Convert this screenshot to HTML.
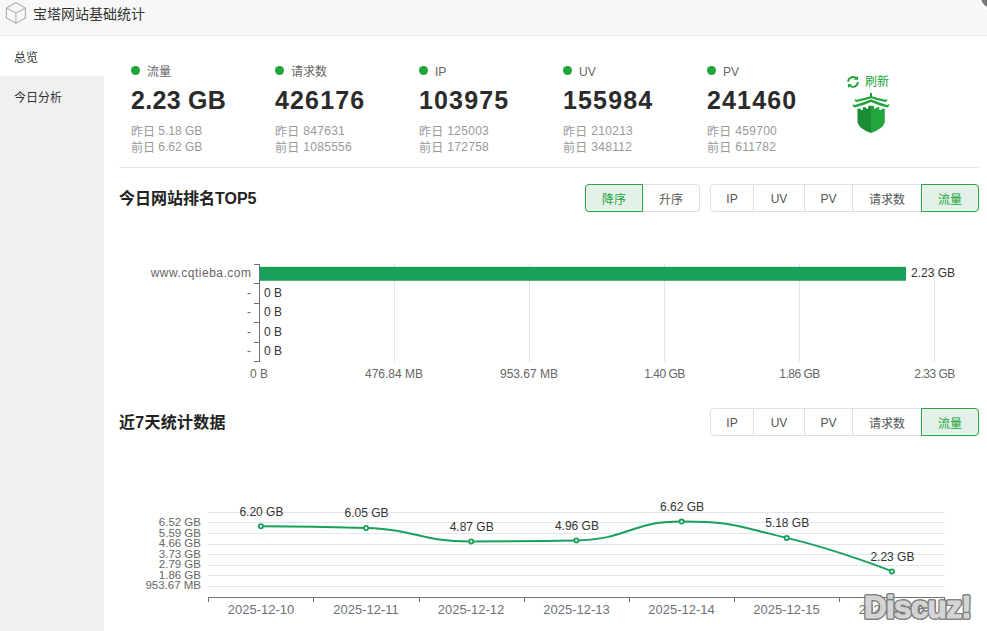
<!DOCTYPE html>
<html lang="zh-CN">
<head>
<meta charset="utf-8">
<title>宝塔网站基础统计</title>
<style>
*{box-sizing:border-box;margin:0;padding:0}
html,body{width:987px;height:631px;overflow:hidden;background:#fff}
body{font-family:"Liberation Sans","Noto Sans CJK SC",sans-serif;font-size:12px;color:#333;position:relative}
.abs{position:absolute}
#hdr{left:0;top:0;width:987px;height:36px;background:#f8f8f8;border-bottom:1px solid #ececec}
#hdr .ttl{left:33px;top:0;height:28px;line-height:28px;font-size:14px;color:#333;white-space:nowrap}
#close{left:978px;top:-17.5px;width:28px;height:28px;border-radius:50%;background:#767676;border:3px solid #fff;box-shadow:0 0 2px rgba(0,0,0,.08)}
#side{left:0;top:36px;width:104px;height:595px;background:#f0f0f0}
#side .it{left:0;width:104px;height:40px;line-height:44px;padding-left:14px;font-size:12px;color:#333;white-space:nowrap}
#side .it.on{background:#fff}
.stat{top:60px;width:140px;white-space:nowrap}
.stat .lb{left:0;top:1px;height:22px;line-height:22px;font-size:12px;color:#666;padding-left:16px}
.stat .dot{left:-0.4px;top:6.3px;width:9px;height:9px;border-radius:50%;background:#20a53a}
.stat .num{left:0;top:25px;height:30px;line-height:30px;font-size:25px;font-weight:bold;color:#2b2b2b;letter-spacing:1.15px}
.stat .num.n1{letter-spacing:0.3px}
.stat .sub.d{letter-spacing:0.3px}
.stat .sub .c{position:relative;top:1px}
.stat .sub{left:0;font-size:12px;color:#999;height:17px;line-height:17px}
.hr{left:119px;top:167px;width:860px;height:1px;background:#e6e6e6}
.h3{left:119px;font-size:16px;font-weight:bold;color:#222;height:24px;line-height:24px;white-space:nowrap}
.bg{top:0;height:28px;display:flex}
.bg span{display:block;height:28px;line-height:30px;overflow:hidden;text-align:center;border:1px solid #dcdfe6;border-left-width:0;background:#fff;color:#555;font-size:12px;white-space:nowrap}
.bg span:first-child{border-left-width:1px;border-radius:4px 0 0 4px}
.bg span:last-child{border-radius:0 4px 4px 0}
.bg span.on{background:#e4f1e9;border:1px solid #20a53a;color:#20a53a;margin-left:-1px;box-shadow:inset 0 0 0 1px rgba(255,255,255,.45)}
.bg span.la{line-height:28px}
.bg span.on:first-child{margin-left:0}
svg text{font-family:"Liberation Sans","Noto Sans CJK SC",sans-serif}
</style>
</head>
<body>
<div id="hdr" class="abs">
  <svg class="abs" style="left:0;top:0" width="32" height="28" viewBox="0 0 32 28">
    <path d="M15.900 2.600 L25.400 7.900 L25.400 17.900 L15.900 23.200 L6.400 17.900 L6.400 7.900 Z M6.400 7.900 L15.900 13.100 L25.400 7.900 M15.900 13.100 L15.900 23.200" fill="none" stroke="#b2b2b2" stroke-width="1.150" stroke-linejoin="round"/>
  </svg>
  <div class="abs ttl">宝塔网站基础统计</div>
  <div id="close" class="abs"></div>
</div>
<div id="side" class="abs">
  <div class="abs it on" style="top:0">总览</div>
  <div class="abs it" style="top:40px">今日分析</div>
</div>

<div class="abs stat" style="left:131px">
  <i class="abs dot"></i><div class="abs lb">流量</div>
  <div class="abs num n1">2.23 GB</div>
  <div class="abs sub" style="top:63px"><span class="c">昨日</span> 5.18 GB</div>
  <div class="abs sub" style="top:79px"><span class="c">前日</span> 6.62 GB</div>
</div>
<div class="abs stat" style="left:275px">
  <i class="abs dot"></i><div class="abs lb">请求数</div>
  <div class="abs num">426176</div>
  <div class="abs sub d" style="top:63px"><span class="c">昨日</span> 847631</div>
  <div class="abs sub d" style="top:79px"><span class="c">前日</span> 1085556</div>
</div>
<div class="abs stat" style="left:419px">
  <i class="abs dot"></i><div class="abs lb">IP</div>
  <div class="abs num">103975</div>
  <div class="abs sub d" style="top:63px"><span class="c">昨日</span> 125003</div>
  <div class="abs sub d" style="top:79px"><span class="c">前日</span> 172758</div>
</div>
<div class="abs stat" style="left:563px">
  <i class="abs dot"></i><div class="abs lb">UV</div>
  <div class="abs num">155984</div>
  <div class="abs sub d" style="top:63px"><span class="c">昨日</span> 210213</div>
  <div class="abs sub d" style="top:79px"><span class="c">前日</span> 348112</div>
</div>
<div class="abs stat" style="left:707px">
  <i class="abs dot"></i><div class="abs lb">PV</div>
  <div class="abs num">241460</div>
  <div class="abs sub d" style="top:63px"><span class="c">昨日</span> 459700</div>
  <div class="abs sub d" style="top:79px"><span class="c">前日</span> 611782</div>
</div>

<!-- refresh + logo -->
<svg class="abs" style="left:843px;top:72px" width="20" height="20" viewBox="0 0 20 20">
  <path d="M5.150 9.800 A4.850 4.850 0 0 1 13.700 6.700" fill="none" stroke="#20a53a" stroke-width="1.900"/>
  <path d="M15.150 3.800 L15.150 7.750 L10.700 7.650 Z" fill="#20a53a"/>
  <path d="M14.850 10 A4.850 4.850 0 0 1 6.300 13.100" fill="none" stroke="#20a53a" stroke-width="1.900"/>
  <path d="M4.950 15.900 L4.950 12.050 L8.900 12.250 Z" fill="#20a53a"/>
</svg>
<div class="abs" style="left:865px;top:72px;height:20px;line-height:20px;font-size:12px;color:#20a53a;white-space:nowrap">刷新</div>
<svg class="abs" style="left:851px;top:92px" width="40" height="42" viewBox="0 0 40 42">
  <rect x="19" y="0.900" width="2" height="5" fill="#20a53a"/>
  <path d="M3.500 6.500 Q4.200 8 5.600 7.700 Q13 6.200 20 3.900 Q27 6.200 34.400 7.700 Q35.800 8 36.500 6.500 Q36.600 9.600 34.600 10 Q27 8.700 20 6.300 Q13 8.700 5.400 10 Q3.400 9.600 3.500 6.500 Z" fill="#20a53a"/>
  <path d="M1.700 11.600 Q2.500 13.300 4 12.900 Q12 10.800 20 7.300 Q28 10.800 36 12.900 Q37.500 13.300 38.300 11.600 Q38.500 15 36.300 15.600 Q28 13.700 20 10 Q12 13.700 3.700 15.600 Q1.500 15 1.700 11.600 Z" fill="#20a53a"/>
  <path d="M6.500 16.700 L9.800 16.700 L9.800 18 L11.900 18 L11.900 15.200 L14.900 15.200 L14.900 16.400 L17.300 16.400 L17.300 13.700 L20 13.700 L20 41 C13 38.600 6.900 34.500 6.500 29.500 Z" fill="#1a8c33"/>
  <path d="M33.800 16.700 L30.500 16.700 L30.500 18 L28.400 18 L28.400 15.200 L25.400 15.200 L25.400 16.400 L23 16.400 L23 13.700 L20 13.700 L20 41 C27 38.600 33.400 34.500 33.800 29.500 Z" fill="#22a53c"/>
</svg>

<div class="abs hr"></div>

<!-- section 1 -->
<div class="abs h3" style="top:187px">今日网站排名TOP5</div>
<div class="abs bg" style="left:585px;top:184px">
  <span class="on" style="width:58px">降序</span><span style="width:57px">升序</span>
</div>
<div class="abs bg" style="left:710px;top:184px">
  <span style="width:44px" class="la">IP</span><span style="width:51px" class="la">UV</span><span style="width:48px" class="la">PV</span><span style="width:69px">请求数</span><span class="on" style="width:58px">流量</span>
</div>

<svg class="abs" style="left:104px;top:230px" width="883" height="170" viewBox="104 230 883 170">
  <g stroke="#e0e6f1" stroke-width="1" shape-rendering="crispEdges">
    <line x1="394.500" y1="264" x2="394.500" y2="362"/>
    <line x1="529.500" y1="264" x2="529.500" y2="362"/>
    <line x1="664.500" y1="264" x2="664.500" y2="362"/>
    <line x1="799.500" y1="264" x2="799.500" y2="362"/>
    <line x1="934.500" y1="264" x2="934.500" y2="362"/>
  </g>
  <rect x="259" y="266.800" width="647" height="14" fill="#19a15a"/>
  <g stroke="#6e7079" stroke-width="1" shape-rendering="crispEdges">
    <line x1="259.500" y1="264" x2="259.500" y2="362"/>
    <line x1="254" y1="264.500" x2="260" y2="264.500"/>
    <line x1="254" y1="283.500" x2="260" y2="283.500"/>
    <line x1="254" y1="303.500" x2="260" y2="303.500"/>
    <line x1="254" y1="322.500" x2="260" y2="322.500"/>
    <line x1="254" y1="342.500" x2="260" y2="342.500"/>
    <line x1="254" y1="361.500" x2="260" y2="361.500"/>
  </g>
  <g font-size="12" fill="#666" text-anchor="end">
    <text x="251.500" y="277" letter-spacing="0.5">www.cqtieba.com</text>
    <text x="251" y="297">-</text>
    <text x="251" y="316">-</text>
    <text x="251" y="336">-</text>
    <text x="251" y="355">-</text>
  </g>
  <g font-size="12" fill="#333">
    <text x="911" y="277">2.23 GB</text>
    <text x="264" y="297">0 B</text>
    <text x="264" y="316">0 B</text>
    <text x="264" y="336">0 B</text>
    <text x="264" y="355">0 B</text>
  </g>
  <g font-size="12" fill="#666" text-anchor="middle">
    <text x="259" y="378">0 B</text>
    <text x="394" y="378">476.84 MB</text>
    <text x="529" y="378">953.67 MB</text>
    <text x="664.500" y="378" letter-spacing="-0.500">1.40 GB</text>
    <text x="799.500" y="378" letter-spacing="-0.500">1.86 GB</text>
    <text x="934.500" y="378" letter-spacing="-0.500">2.33 GB</text>
  </g>
</svg>

<!-- section 2 -->
<div class="abs h3" style="top:411px;letter-spacing:0.25px">近7天统计数据</div>
<div class="abs bg" style="left:710px;top:408px">
  <span style="width:44px" class="la">IP</span><span style="width:51px" class="la">UV</span><span style="width:48px" class="la">PV</span><span style="width:69px">请求数</span><span class="on" style="width:58px">流量</span>
</div>

<svg class="abs" style="left:104px;top:480px" width="883" height="151" viewBox="104 480 883 151">
  <g stroke="#e0e6f1" stroke-width="1" shape-rendering="crispEdges">
    <line x1="208" y1="512.500" x2="945" y2="512.500"/>
    <line x1="208" y1="522.500" x2="945" y2="522.500"/>
    <line x1="208" y1="533.500" x2="945" y2="533.500"/>
    <line x1="208" y1="544.500" x2="945" y2="544.500"/>
    <line x1="208" y1="554.500" x2="945" y2="554.500"/>
    <line x1="208" y1="565.500" x2="945" y2="565.500"/>
    <line x1="208" y1="575.500" x2="945" y2="575.500"/>
    <line x1="208" y1="586.500" x2="945" y2="586.500"/>
  </g>
  <g stroke="#6e7079" stroke-width="1" shape-rendering="crispEdges">
    <line x1="208" y1="597.500" x2="945" y2="597.500"/>
    <line x1="208.500" y1="597" x2="208.500" y2="602"/>
    <line x1="313.500" y1="597" x2="313.500" y2="602"/>
    <line x1="419.500" y1="597" x2="419.500" y2="602"/>
    <line x1="524.500" y1="597" x2="524.500" y2="602"/>
    <line x1="629.500" y1="597" x2="629.500" y2="602"/>
    <line x1="734.500" y1="597" x2="734.500" y2="602"/>
    <line x1="839.500" y1="597" x2="839.500" y2="602"/>
    <line x1="944.500" y1="597" x2="944.500" y2="602"/>
  </g>
  <g font-size="11.500" fill="#666" text-anchor="end">
    <text x="201" y="526.0">6.52 GB</text>
    <text x="201" y="536.5">5.59 GB</text>
    <text x="201" y="547.0">4.66 GB</text>
    <text x="201" y="557.5">3.73 GB</text>
    <text x="201" y="568.0">2.79 GB</text>
    <text x="201" y="578.5">1.86 GB</text>
    <text x="201" y="589.0">953.67 MB</text>
  </g>
  <g font-size="13" fill="#6e7079" text-anchor="middle">
    <text x="261" y="614">2025-12-10</text>
    <text x="366" y="614">2025-12-11</text>
    <text x="471" y="614">2025-12-12</text>
    <text x="576.500" y="614">2025-12-13</text>
    <text x="681.500" y="614">2025-12-14</text>
    <text x="786.500" y="614">2025-12-15</text>
    <text x="892" y="614">2025-12-16</text>
  </g>
  <path d="M260.9 526.3 C260.9 526.3 313.7 526.3 366.1 528.0 C418.8 529.7 418.4 541.4 471.2 541.4 C523.6 541.4 524.2 541.4 576.4 540.4 C629.4 539.4 628.9 521.6 681.6 521.6 C734.0 521.6 735.1 525.7 786.7 537.9 C840.3 550.6 891.9 571.4 891.9 571.4" fill="none" stroke="#19a15a" stroke-width="2"/>
  <g fill="#fff" stroke="#19a15a" stroke-width="1.800">
    <circle cx="260.9" cy="526.3" r="2.100"/>
    <circle cx="366.1" cy="528.0" r="2.100"/>
    <circle cx="471.2" cy="541.4" r="2.100"/>
    <circle cx="576.4" cy="540.4" r="2.100"/>
    <circle cx="681.6" cy="521.6" r="2.100"/>
    <circle cx="786.7" cy="537.9" r="2.100"/>
    <circle cx="891.9" cy="571.4" r="2.100"/>
  </g>
  <g font-size="12" fill="#333" text-anchor="middle">
    <text x="261.400" y="515.5">6.20 GB</text>
    <text x="366.600" y="517.2">6.05 GB</text>
    <text x="471.700" y="530.6">4.87 GB</text>
    <text x="576.900" y="529.6">4.96 GB</text>
    <text x="682.100" y="510.8">6.62 GB</text>
    <text x="787.200" y="527.1">5.18 GB</text>
    <text x="892.400" y="560.6">2.23 GB</text>
  </g>
</svg>

<!-- watermark -->
<svg class="abs" style="left:855px;top:585px" width="132" height="46" viewBox="855 585 132 46">
  <g font-size="31.500" font-weight="bold" opacity="0.93" stroke-linejoin="round" style="font-kerning:none">
    <text x="864.0" y="617.500" letter-spacing="-0.720" fill="#757575" stroke="#757575" stroke-width="3.600">Discuz!</text>
    <text x="864.0" y="617.500" fill="#757575" stroke="#757575" stroke-width="3.600">D</text><text x="864.0" y="617.500" fill="#d2d2d2" stroke="#d2d2d2" stroke-width="1.200">D</text>
    <text x="886.0" y="617.500" fill="#757575" stroke="#757575" stroke-width="3.600">i</text><text x="886.0" y="617.500" fill="#d2d2d2" stroke="#d2d2d2" stroke-width="1.200">i</text>
    <text x="894.1" y="617.500" fill="#757575" stroke="#757575" stroke-width="3.600">s</text><text x="894.1" y="617.500" fill="#d2d2d2" stroke="#d2d2d2" stroke-width="1.200">s</text>
    <text x="910.9" y="617.500" fill="#757575" stroke="#757575" stroke-width="3.600">c</text><text x="910.9" y="617.500" fill="#d2d2d2" stroke="#d2d2d2" stroke-width="1.200">c</text>
    <text x="927.6" y="617.500" fill="#757575" stroke="#757575" stroke-width="3.600">u</text><text x="927.6" y="617.500" fill="#d2d2d2" stroke="#d2d2d2" stroke-width="1.200">u</text>
    <text x="946.2" y="617.500" fill="#757575" stroke="#757575" stroke-width="3.600">z</text><text x="946.2" y="617.500" fill="#d2d2d2" stroke="#d2d2d2" stroke-width="1.200">z</text>
    <text x="961.2" y="617.500" fill="#757575" stroke="#757575" stroke-width="3.600">!</text><text x="961.2" y="617.500" fill="#d2d2d2" stroke="#d2d2d2" stroke-width="1.200">!</text>
  </g>
</svg>
</body>
</html>
